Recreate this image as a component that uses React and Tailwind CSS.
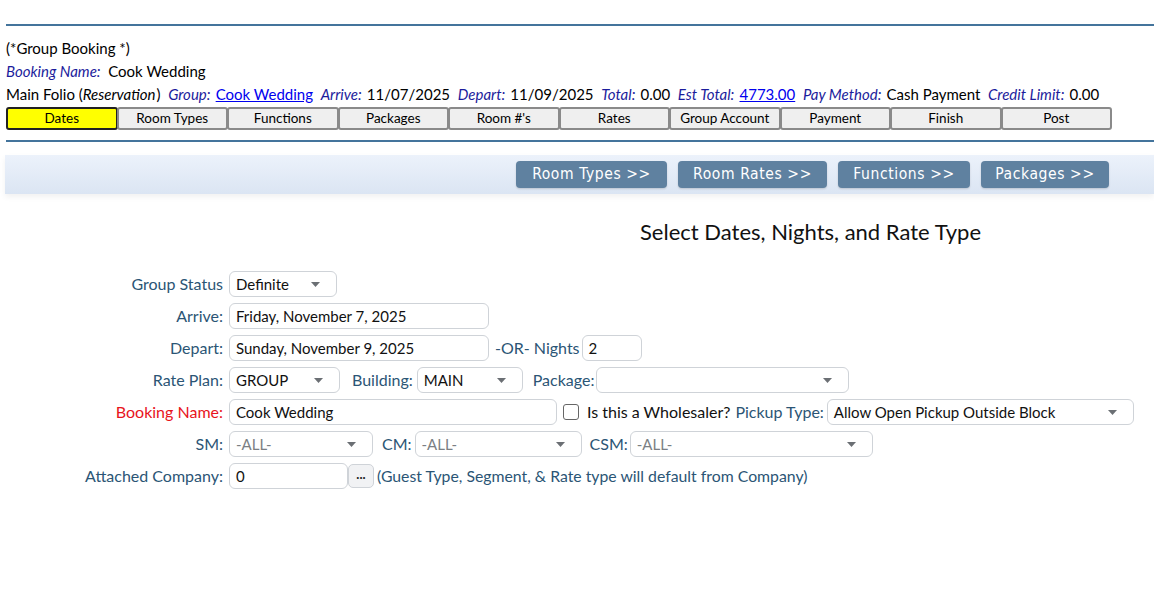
import React from 'react';

const tabs = ['Dates', 'Room Types', 'Functions', 'Packages', "Room #'s", 'Rates', 'Group Account', 'Payment', 'Finish', 'Post'];
const actions = [
  { label: 'Room Types >>', w: 'w-[151px]' },
  { label: 'Room Rates >>', w: 'w-[149px]' },
  { label: 'Functions >>', w: 'w-[132px]' },
  { label: 'Packages >>', w: 'w-[128px]' },
];

function Caret() {
  return (
    <svg width="9" height="5" viewBox="0 0 9 5" className="shrink-0">
      <path d="M0 0 L9 0 L4.5 5 Z" fill="#6b6f74" />
    </svg>
  );
}

function Select({ value, w, muted }) {
  return (
    <div className={`${w} h-[26px] border border-[#cfd3d8] rounded-[6px] bg-white flex items-center justify-between pl-[6px] pr-[16px] text-[15px]`}>
      <span className={muted ? 'text-[#7b7f84]' : 'text-[#111]'}>{value}</span>
      <Caret />
    </div>
  );
}

function Input({ value, w }) {
  return (
    <div className={`${w} h-[26px] border border-[#cfd3d8] rounded-[6px] bg-white flex items-center pl-[6px] text-[15px] text-[#111]`}>
      {value}
    </div>
  );
}

function Row({ label, red, children }) {
  return (
    <div className="flex items-center h-[32px]">
      <div className={`w-[229px] shrink-0 text-right pr-[6px] ${red ? 'text-[#e8141c]' : 'text-[#2b5575]'}`}>{label}</div>
      <div className="flex items-center">{children}</div>
    </div>
  );
}

const Lbl = ({ children, cls = '' }) => <span className={`text-[#2b5575] ${cls}`}>{children}</span>;
const H = ({ children }) => <i className="text-[#1c1c9c] pr-[1.3px]">{children}</i>;

export default function App() {
  return (
    <div className="w-[1154px] h-[594px] bg-white font-['Lato','Liberation_Sans',sans-serif] text-[15px] text-black overflow-hidden">
      <div className="pt-[24px] pl-[6px]">
        <div className="h-[2px] bg-[#44749c]" />
        <div className="mt-[11px] leading-[23px]">
          <div>(*Group Booking *)</div>
          <div><i className="text-[#1c1c9c]">Booking Name:</i>&nbsp; Cook Wedding</div>
          <div className="whitespace-nowrap">
            Main Folio (<i className="pr-[1px]">Reservation</i>)&nbsp; <H>Group:</H> <a className="text-[#0000ee] underline">Cook Wedding</a>&nbsp;
            {' '}<H>Arrive:</H> 11/07/2025&nbsp; <H>Depart:</H> 11/09/2025&nbsp;
            {' '}<H>Total:</H> 0.00&nbsp; <H>Est Total:</H> <a className="text-[#0000ee] underline">4773.00</a>&nbsp;
            {' '}<H>Pay Method:</H> Cash Payment&nbsp; <H>Credit Limit:</H> 0.00
          </div>
        </div>
        <div className="flex w-[1106px] mt-[1px]">
          {tabs.map((t, i) => (
            <div
              key={t}
              className={`flex-1 h-[23px] flex items-center justify-center text-[13.5px] rounded-[3px] ${i === 0 ? 'bg-[#ffff00] border-2 border-[#222]' : 'bg-[#efefef] border-2 border-[#8a8a8a]'} ${i > 0 ? '-ml-[1px]' : ''}`}
            >
              {t}
            </div>
          ))}
        </div>
        <div className="h-[2px] bg-[#44749c] mt-[10px]" />
      </div>

      <div className="ml-[5px] mt-[13px] h-[39px] bg-gradient-to-b from-[#ecf2fb] to-[#dbe5f3] shadow-[0_3px_6px_rgba(0,0,0,0.06)] flex items-center pl-[511px] gap-[11px]">
        {actions.map((a) => (
          <div
            key={a.label}
            className={`${a.w} h-[27px] bg-[#5f81a0] rounded-[4px] text-white flex items-center justify-center text-[15.5px] tracking-[0.6px] font-['DejaVu_Sans_Condensed','Liberation_Sans_Narrow',sans-serif] shadow-[0_1px_2px_rgba(0,0,0,0.15)]`}
          >
            {a.label}
          </div>
        ))}
      </div>

      <div className="pl-[640px] mt-[24px] text-[22px] text-[#111] leading-[28px]">Select Dates, Nights, and Rate Type</div>

      <div className="mt-[22px] text-[16px]">
        <Row label="Group Status">
          <Select value="Definite" w="w-[108px]" />
        </Row>
        <Row label="Arrive:">
          <Input value="Friday, November 7, 2025" w="w-[260px]" />
        </Row>
        <Row label="Depart:">
          <Input value="Sunday, November 9, 2025" w="w-[260px]" />
          <Lbl cls="ml-[6px] mr-[2px]">-OR- Nights</Lbl>
          <Input value="2" w="w-[60px]" />
        </Row>
        <Row label="Rate Plan:">
          <Select value="GROUP" w="w-[111px]" />
          <Lbl cls="ml-[12px] mr-[4px]">Building:</Lbl>
          <Select value="MAIN" w="w-[106px]" />
          <Lbl cls="ml-[10px] mr-[2px]">Package:</Lbl>
          <Select value="" w="w-[253px]" />
        </Row>
        <Row label="Booking Name:" red>
          <Input value="Cook Wedding" w="w-[328px]" />
          <div className="ml-[6px] w-[16px] h-[16px] border border-[#666] rounded-[3px] bg-white" />
          <span className="ml-[8px] text-[#111]">Is this a Wholesaler?</span>
          <Lbl cls="ml-[5px] mr-[3px]">Pickup Type:</Lbl>
          <Select value="Allow Open Pickup Outside Block" w="w-[307px]" />
        </Row>
        <Row label="SM:">
          <Select value="-ALL-" w="w-[144px]" muted />
          <Lbl cls="ml-[9px] mr-[3px]">CM:</Lbl>
          <Select value="-ALL-" w="w-[167px]" muted />
          <Lbl cls="ml-[8px] mr-[2px]">CSM:</Lbl>
          <Select value="-ALL-" w="w-[243px]" muted />
        </Row>
        <Row label="Attached Company:">
          <Input value="0" w="w-[119px]" />
          <div className="w-[26px] h-[24px] border border-[#cfd3d8] rounded-[5px] bg-[#f1f2f4] flex items-center justify-center text-[13px] font-bold leading-none pb-[3px] text-[#222]">...</div>
          <Lbl cls="ml-[3px] text-[15.8px]">(Guest Type, Segment, &amp; Rate type will default from Company)</Lbl>
        </Row>
      </div>
    </div>
  );
}
